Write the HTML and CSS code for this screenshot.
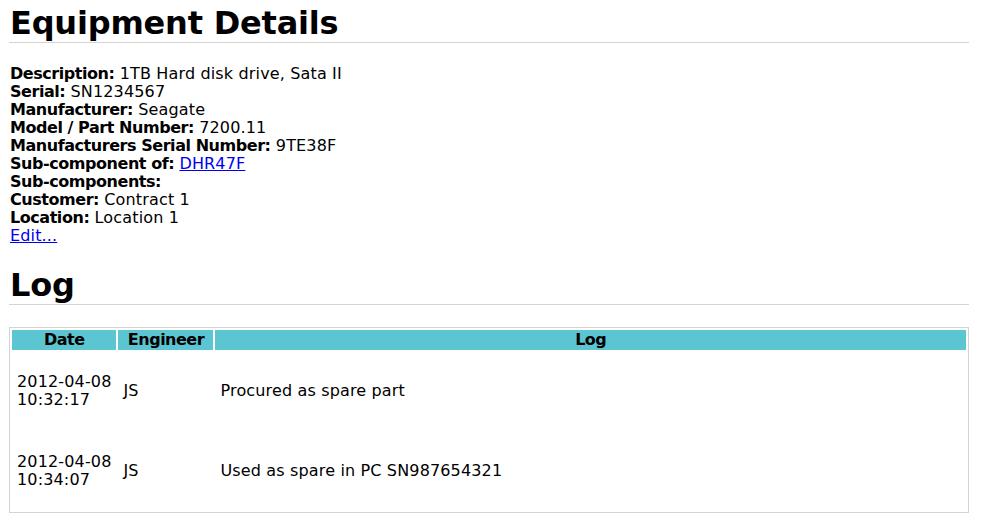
FILE: index.html
```html
<!DOCTYPE html>
<html lang="en">
<head>
    <meta charset="UTF-8">
    <title>Equipment Details</title>
    <link rel="stylesheet" href="styles.css">
</head>
<body>
    <div class="page">
        <h1>Equipment Details</h1>
        <div class="details">
            <div><b>Description:</b> 1TB Hard disk drive, Sata II</div>
            <div><b>Serial:</b> SN1234567</div>
            <div><b>Manufacturer:</b> Seagate</div>
            <div><b>Model / Part Number:</b> 7200.11</div>
            <div><b>Manufacturers Serial Number:</b> 9TE38F</div>
            <div><b>Sub-component of:</b> <a href="#">DHR47F</a></div>
            <div><b>Sub-components:</b></div>
            <div><b>Customer:</b> Contract 1</div>
            <div><b>Location:</b> Location 1</div>
            <div><a href="#">Edit...</a></div>
        </div>
        <h1>Log</h1>
        <table class="log">
            <thead>
                <tr>
                    <th class="col-date">Date</th>
                    <th class="col-eng">Engineer</th>
                    <th>Log</th>
                </tr>
            </thead>
            <tbody>
                <tr>
                    <td><span class="nw">2012-04-08</span> <span class="nw">10:32:17</span></td>
                    <td>JS</td>
                    <td>Procured as spare part</td>
                </tr>
                <tr>
                    <td><span class="nw">2012-04-08</span> <span class="nw">10:34:07</span></td>
                    <td>JS</td>
                    <td>Used as spare in PC SN987654321</td>
                </tr>
            </tbody>
        </table>
    </div>
</body>
</html>
```

FILE: styles.css
```css
body {
    margin: 0;
    font-family: "DejaVu Sans", Verdana, sans-serif;
    font-size: 16px;
    letter-spacing: 0.15px;
    line-height: 18px;
    color: #000;
    background: #fff;
}
.page {
    width: 960px;
    margin: 0 0 0 9px;
}
h1 {
    font-size: 32px;
    letter-spacing: -0.2px;
    line-height: 38px;
    margin: 4px 0 0 0;
    padding: 0 1px 0;
    border-bottom: 1px solid #d3d3d3;
}
.details {
    margin: 22px 0 21px;
    padding-left: 1px;
}
.details b {
    letter-spacing: -0.45px;
}
a {
    color: #0000ee;
}
.log {
    width: 960px;
    margin-top: 22px;
    border: 1px solid #d3d3d3;
    border-spacing: 2px;
}
.log th {
    background: #5bc5d2;
    height: 20px;
    padding: 0;
    font-weight: bold;
    letter-spacing: -0.5px;
}
.col-date {
    width: 104px;
}
.col-eng {
    width: 95px;
}
.log td {
    height: 78px;
    padding: 0 5px;
    vertical-align: middle;
}
.nw {
    white-space: nowrap;
}
```
